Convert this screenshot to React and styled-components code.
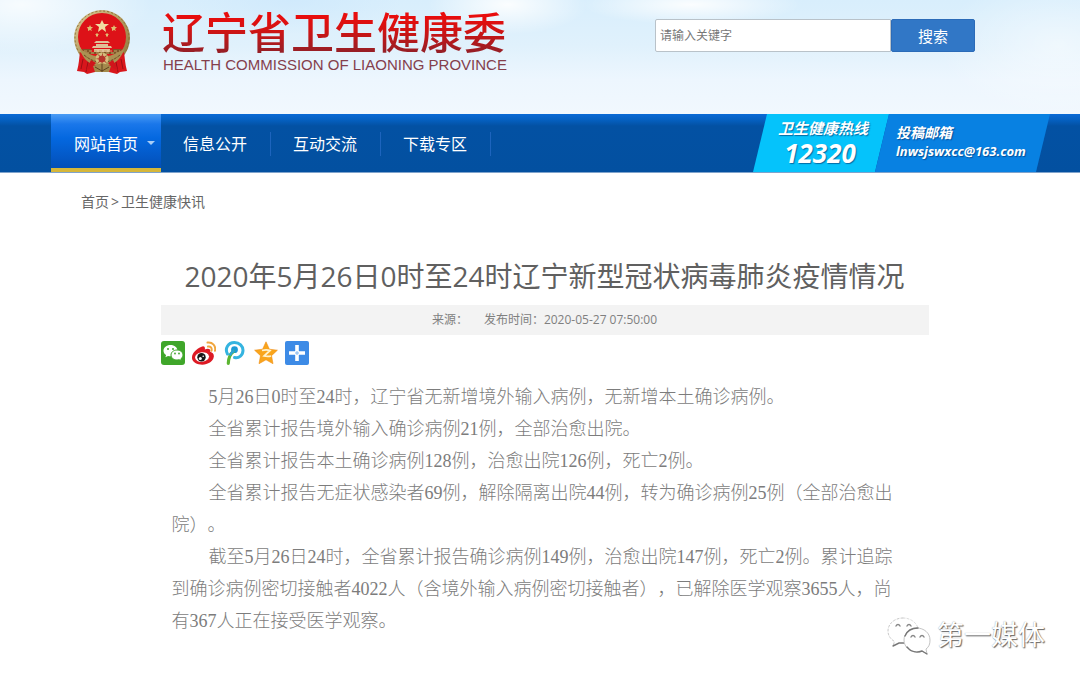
import React from 'react';
import styled, { createGlobalStyle } from 'styled-components';

const sans = '"Open Sans", "Noto Sans CJK SC", sans-serif';
const song = '"Liberation Serif", "Noto Sans CJK SC", serif';

const GlobalStyle = createGlobalStyle`
    * {
        box-sizing: border-box;
    }

    body {
        margin: 0;
        background: #fff;
        font-family: ${sans};
        text-spacing-trim: space-all;
    }
`;

const Page = styled.div`
    position: relative;
`;

const Header = styled.header`
    height: 114px;
    padding: 9px 105px 0 71px;
    display: flex;
    justify-content: space-between;
    align-items: flex-start;
    background:
        radial-gradient(ellipse 130px 50px at 2% 4%, rgba(255, 255, 255, .8), transparent),
        radial-gradient(ellipse 110px 34px at 27% 0, rgba(205, 232, 252, .7), transparent),
        radial-gradient(ellipse 80px 30px at 47% 4%, rgba(255, 255, 255, .9), transparent),
        radial-gradient(ellipse 110px 20px at 64% 4%, rgba(255, 255, 255, .9), transparent),
        radial-gradient(ellipse 120px 70px at 98% 40%, rgba(255, 255, 255, .5), transparent),
        linear-gradient(#d8eefc 0, #e0f1fc 40%, #edf6fe 70%, #f1f8fe 100%);
`;

const Brand = styled.a`
    display: flex;
    gap: 29px;
    text-decoration: none;
`;

const BrandText = styled.div`
    display: flex;
    flex-direction: column;
`;

const BrandName = styled.div`
    font-size: 43px;
    font-weight: 500;
    line-height: 48px;
    color: transparent;
    background: linear-gradient(#e80d0d 15%, #d01414 45%, #8f2028 95%);
    background-clip: text;
`;

const BrandLatin = styled.div`
    padding-left: 1px;
    font-family: "Liberation Sans", sans-serif;
    font-size: 15px;
    line-height: 16px;
    white-space: nowrap;
    color: #84404c;
`;

const Search = styled.form`
    margin-top: 10px;
    display: flex;
`;

const SearchInput = styled.input`
    width: 236px;
    height: 33px;
    padding: 0 4px;
    border: 1px solid #b9c2c9;
    border-radius: 2px 0 0 2px;
    background: #fff;
    font-family: ${sans};
    font-size: 12px;
    color: #444;

    &::placeholder {
        color: #777;
    }
`;

const SearchButton = styled.button`
    width: 84px;
    height: 33px;
    padding: 0;
    border: 1px solid #2b6bb8;
    border-radius: 2px;
    background: #3177c6;
    color: #fff;
    font-family: ${sans};
    font-size: 15px;
`;

const Nav = styled.nav`
    height: 59px;
    padding: 0 30px 0 51px;
    display: flex;
    justify-content: space-between;
    background: linear-gradient(#0a6ad6 0, #0560c0 6px, #0351a3 12px, #0350a0 100%);
    border-bottom: 1px solid #7fa3cc;
`;

const Menu = styled.div`
    display: flex;
`;

const MenuItem = styled.a`
    width: 110px;
    height: 58px;
    padding: ${props => (props.$active ? '4px 0 0 23px' : '0 0 0 22px')};
    display: flex;
    align-items: center;
    gap: 9px;
    color: #fff;
    font-size: 16px;
    text-decoration: none;
    background: ${props => (props.$active
        ? 'linear-gradient(#4a9cf5 0, #1a77ea 10px, #0468e0 24px, #034fb8 100%)'
        : 'linear-gradient(#1d64bd, #1d64bd) right 18px / 1px 24px no-repeat')};
    border-bottom: ${props => (props.$active ? '4px solid #d6b73a' : '0')};
`;

const Caret = styled.span`
    border: 4px solid transparent;
    border-top-color: #a9cdf6;
    border-bottom: 0;
`;

const Contacts = styled.div`
    display: flex;
`;

const ContactPanel = styled.div`
    display: flex;
    flex-direction: column;
    color: #fff;
    font-style: italic;
    font-weight: 700;
    text-shadow: 1px 1px 1px rgba(0, 50, 110, .6);
    clip-path: polygon(14px 0, 100% 0, calc(100% - 14px) 100%, 0 100%);
`;

const Hotline = styled(ContactPanel)`
    width: 136px;
    padding: 3px 2px 0 0;
    align-items: center;
    background: #05c3fb;
`;

const Mail = styled(ContactPanel)`
    width: 175px;
    margin-left: -14px;
    padding: 10px 0 0 21px;
    background: #0881e2;
`;

const HotlineTitle = styled.div`
    padding-left: 6px;
    font-size: 15px;
    line-height: 22px;
`;

const HotlineNumber = styled.div`
    font-size: 26px;
    line-height: 28px;
`;

const MailLine = styled.div`
    font-size: ${props => (props.$small ? '13px' : '14px')};
    line-height: 18px;
`;

const Main = styled.main`
    padding: 0 42px 0 51px;
`;

const Breadcrumb = styled.div`
    padding: 18px 30px 0;
    display: flex;
    gap: 2px;
    font-size: 14px;
    line-height: 22px;
    color: #666;

    a {
        color: inherit;
        text-decoration: none;
    }
`;

const Article = styled.article`
    max-width: 768px;
    margin: 0 auto;
    padding-top: 39px;
`;

const Title = styled.h1`
    margin: 0;
    font-size: 28px;
    font-weight: 400;
    line-height: 48px;
    text-align: center;
    white-space: nowrap;
    color: #606060;
`;

const Meta = styled.div`
    height: 30px;
    margin-top: 5px;
    display: flex;
    justify-content: center;
    gap: 16px;
    background: #f3f3f3;
    font-size: 12px;
    line-height: 30px;
    color: #808080;
`;

const Share = styled.div`
    margin-top: 6px;
    display: flex;
    gap: 7px;
`;

const ShareButton = styled.button`
    width: 24px;
    height: 24px;
    padding: 0;
    border: 0;
    background: none;

    svg {
        display: block;
    }
`;

const Body = styled.div`
    padding: 16px 22px 46px 11px;
    font-family: ${song};
    font-size: 18px;
    font-weight: 300;
    line-height: 32px;
    color: #7c7c7c;

    p {
        margin: 0;
        text-indent: 37px;
    }
`;

const Watermark = styled.div`
    position: absolute;
    right: 35px;
    bottom: 28px;
    display: flex;
    align-items: center;
    gap: 6px;
    color: #fff;
    font-size: 27px;
    line-height: 40px;
    text-shadow: 1px 1px 1px #666, 0 0 1px #999;
`;

const Emblem = () => (
    <svg width="62" height="68" viewBox="0 0 62 68" role="img" aria-label="国徽">
        <defs>
            <linearGradient id="gold" x1="0" y1="0" x2="1" y2="1">
                <stop offset="0" stopColor="#e0cf9d" />
                <stop offset=".5" stopColor="#b39a5e" />
                <stop offset="1" stopColor="#8c7238" />
            </linearGradient>
        </defs>
        <circle cx="31" cy="29" r="28" fill="url(#gold)" />
        <circle cx="31" cy="29" r="27" fill="none" stroke="#8b7137" strokeDasharray="2 2" />
        <path d="M9 43c-1 7-1 12-3 19l7 1 3 2 8-2h14l8 2 3-2 7-1c-2-7-2-12-3-19L42 52H20z" fill="#d8161c" />
        <path d="M12 50l-2 10M17 53l-2 10M50 50l2 10M45 53l2 10" stroke="#9c0f14" fill="none" />
        <circle cx="31" cy="28" r="24" fill="#dd1218" />
        <path d="M31 11l2 4h5l-4 3 1 5-4-3-4 3 1-5-4-3h5z" fill="#f0dda2" />
        <g fill="#dfbd72">
            <path d="M19 16l1 2h2l-2 2 1 2-2-1-2 1 0-2-1-2h2z" />
            <path d="M43 16l1 2h2l-2 2 1 2-2-1-2 1 0-2-1-2h2z" />
            <path d="M26 24l1 1h1l-1 1v2l-1-1-1 1v-2l-1-1h1z" />
            <path d="M36 24l1 1h1l-1 1v2l-1-1-1 1v-2l-1-1h1z" />
        </g>
        <path d="M25 32h12l2 2H23zM25 35h12v2H25zM22 37h18l1 2H21zM23 40h16v3H23z" fill="#dfc298" />
        <path d="M11 40h9v3h22v-3h9l-3 5H14z" fill="#7e5527" />
        <path d="M13 42h36M15 44h32" stroke="#c7a46a" strokeDasharray="3 2" />
        <path d="M9 40c7 4 13 7 16 7 1-2 3-3 6-3s5 1 6 3c3 0 9-3 16-7-2 8-7 13-13 16H22C16 53 11 48 9 40z" fill="#ab9152" />
        <path d="M13 46c5 4 9 6 14 7M49 46c-5 4-9 6-14 7" stroke="#6f4c24" strokeDasharray="3 1" fill="none" />
        <circle cx="31" cy="50" r="5" fill="#b5352a" stroke="#d5bd7d" strokeWidth="3" strokeDasharray="3 1" />
        <path d="M20 51l5 3-5 5-5 2zM42 51l-5 3 5 5 5 2z" fill="#cf151b" />
        <path d="M22 57l9-3 9 3-2 6H24z" fill="#a48a4c" />
        <path d="M24 58l7 4 7-4M31 55v8" fill="none" stroke="#5f4320" />
    </svg>
);

const WechatIcon = () => (
    <svg width="24" height="24" viewBox="0 0 24 24">
        <rect width="24" height="24" rx="3" fill="#3fa62a" />
        <path d="M9.500 4C5.500 4 2.500 6.500 2.500 9.700c0 1.800 1 3.400 2.600 4.400l-.7 2.200 2.600-1.300c.8.2 1.600.3 2.500.3 4 0 7-2.500 7-5.600S13.500 4 9.500 4z" fill="#fff" />
        <path d="M16 9c-3.400 0-6 2.200-6 5s2.600 5 6 5c.8 0 1.500-.1 2.200-.3l2.200 1.200-.6-2c1.400-1 2.200-2.300 2.200-3.900 0-2.800-2.600-5-6-5z" fill="#fff" stroke="#3fa62a" />
        <g fill="#3fa62a">
            <circle cx="7" cy="8" r="1" />
            <circle cx="12" cy="8" r="1" />
            <circle cx="14" cy="12.500" r=".9" />
            <circle cx="18" cy="12.500" r=".9" />
        </g>
    </svg>
);

const WeiboIcon = () => (
    <svg width="24" height="24" viewBox="0 0 24 24">
        <path d="M9 6c2.500-1.500 4.500-.5 3.800 2.400 3.400-1.400 6.200-.8 5.400 2.400 2.400.8 4 2.400 3.600 5-.6 4.500-5.800 7.900-11.500 7.900S-.5 20.800 0 16C.3 12 4.500 8 9 6z" fill="#dd1a24" />
        <ellipse cx="10" cy="16" rx="7" ry="4.800" fill="#fff" transform="rotate(-6 10 16)" />
        <circle cx="9.500" cy="16.300" r="4.200" fill="#171717" />
        <circle cx="8.300" cy="17.500" r="1.500" fill="#fff" />
        <circle cx="11.200" cy="15.300" r=".8" fill="#fff" />
        <path d="M16 5.500c2.600-.4 4.200 1.600 3.500 4.200M15.500 1.600c5-.7 8.700 3.400 7.500 8.200" fill="none" stroke="#f0a63e" strokeWidth="2" strokeLinecap="round" />
    </svg>
);

const TencentIcon = () => (
    <svg width="24" height="24" viewBox="0 0 24 24">
        <path d="M4.500 13C1.500 7.500 5 1.500 11.500 1.500c5 0 8.500 3.500 8.500 7.800 0 5-4 8.200-8.500 7.200" fill="none" stroke="#35b4e0" strokeWidth="3" strokeLinecap="round" />
        <circle cx="11.500" cy="8.700" r="3.400" fill="#1c9ad6" />
        <path d="M10.500 10.500C7 13 5.500 17 5.300 22.300" fill="none" stroke="#5cb531" strokeWidth="3.200" strokeLinecap="round" />
        <path d="M11.500 9.500c-2.500 1-4 3-4.800 5" fill="none" stroke="#2aa5d8" strokeWidth="2.500" />
    </svg>
);

const QzoneIcon = () => (
    <svg width="24" height="24" viewBox="0 0 24 24">
        <path d="M12 .8l3.400 7.400 8 1-5.900 5.500 1.500 8L12 18.800l-7 3.900 1.500-8L.6 9.200l8-1z" fill="#f9a51b" stroke="#f08d12" strokeWidth=".6" strokeLinejoin="round" />
        <path d="M8 9.500c3-.8 5.500-.8 8 0l-6 5.500c2.500.6 5 .6 7 0" fill="none" stroke="#fff3cf" strokeWidth="1.700" />
    </svg>
);

const MoreIcon = () => (
    <svg width="24" height="24" viewBox="0 0 24 24">
        <rect width="24" height="24" rx="2" fill="#3d8be6" />
        <path d="M12 4v16M4 12h16" stroke="#fff" strokeWidth="3.600" />
        <path d="M12 10v4M10 12h4" stroke="#7fb4ef" strokeWidth="1" />
    </svg>
);

const WatermarkIcon = () => (
    <svg width="44" height="40" viewBox="0 0 44 40" fill="none" strokeLinecap="round">
        <path d="M16 3C8 3 1 8.500 1 16c0 4.500 2.500 8 6.500 10.500L6 31" stroke="#c8c8c8" strokeDasharray="2 2" />
        <path d="M16 3c7 0 13 4 15 10" stroke="#dadada" strokeDasharray="2 2" />
        <path d="M6 31l6-3h5" stroke="#777" strokeWidth="1.400" />
        <path d="M30 13c-7 0-13 5-13 12s6 12 13 12c2 0 4 0 5-1l5 3-1-5c3-2 4-5 4-9 0-7-6-12-13-12z" stroke="#c4c4c4" fill="#fff" />
        <path d="M18 21c2-5 7-8 13-8M20 32c4 5 10 6 15 4l5 3" stroke="#777" strokeWidth="1.400" />
        <path d="M9 11c1-2 3-2 4 0M20 11c1-2 3-2 4 0M24 22c1-2 3-2 4 0M33 22c1-2 3-2 4 0" stroke="#888" strokeWidth="1.400" />
    </svg>
);

const menu = ['网站首页', '信息公开', '互动交流', '下载专区'];

const shares = [
    { name: '分享到微信', Icon: WechatIcon },
    { name: '分享到新浪微博', Icon: WeiboIcon },
    { name: '分享到腾讯微博', Icon: TencentIcon },
    { name: '分享到QQ空间', Icon: QzoneIcon },
    { name: '更多', Icon: MoreIcon }
];

const paragraphs = [
    '5月26日0时至24时，辽宁省无新增境外输入病例，无新增本土确诊病例。',
    '全省累计报告境外输入确诊病例21例，全部治愈出院。',
    '全省累计报告本土确诊病例128例，治愈出院126例，死亡2例。',
    '全省累计报告无症状感染者69例，解除隔离出院44例，转为确诊病例25例（全部治愈出院）。',
    '截至5月26日24时，全省累计报告确诊病例149例，治愈出院147例，死亡2例。累计追踪到确诊病例密切接触者4022人（含境外输入病例密切接触者），已解除医学观察3655人，尚有367人正在接受医学观察。'
];

const App = () => {
    return (
        <Page lang="zh-CN">
            <GlobalStyle />
            <Header>
                <Brand href="#">
                    <Emblem />
                    <BrandText>
                        <BrandName>辽宁省卫生健康委</BrandName>
                        <BrandLatin>HEALTH COMMISSION OF LIAONING PROVINCE</BrandLatin>
                    </BrandText>
                </Brand>
                <Search onSubmit={(e) => e.preventDefault()}>
                    <SearchInput type="text" aria-label="请输入关键字" placeholder="请输入关键字" />
                    <SearchButton type="submit">搜索</SearchButton>
                </Search>
            </Header>
            <Nav>
                <Menu>
                    {menu.map((label, index) => (
                        <MenuItem key={label} href="#" $active={index === 0}>
                            {label}
                            {index === 0 && <Caret />}
                        </MenuItem>
                    ))}
                </Menu>
                <Contacts>
                    <Hotline>
                        <HotlineTitle>卫生健康热线</HotlineTitle>
                        <HotlineNumber>12320</HotlineNumber>
                    </Hotline>
                    <Mail>
                        <MailLine>投稿邮箱</MailLine>
                        <MailLine $small>lnwsjswxcc@163.com</MailLine>
                    </Mail>
                </Contacts>
            </Nav>
            <Main>
                <Breadcrumb>
                    <a href="#">首页</a>
                    <span>&gt;</span>
                    <a href="#">卫生健康快讯</a>
                </Breadcrumb>
                <Article>
                    <Title>2020年5月26日0时至24时辽宁新型冠状病毒肺炎疫情情况</Title>
                    <Meta>
                        <span>来源：</span>
                        <span>发布时间：2020-05-27 07:50:00</span>
                    </Meta>
                    <Share>
                        {shares.map(({ name, Icon }) => (
                            <ShareButton key={name} type="button" aria-label={name}>
                                <Icon />
                            </ShareButton>
                        ))}
                    </Share>
                    <Body>
                        {paragraphs.map((text) => (
                            <p key={text}>{text}</p>
                        ))}
                    </Body>
                </Article>
            </Main>
            <Watermark>
                <WatermarkIcon />
                第一媒体
            </Watermark>
        </Page>
    );
};

export default App;
